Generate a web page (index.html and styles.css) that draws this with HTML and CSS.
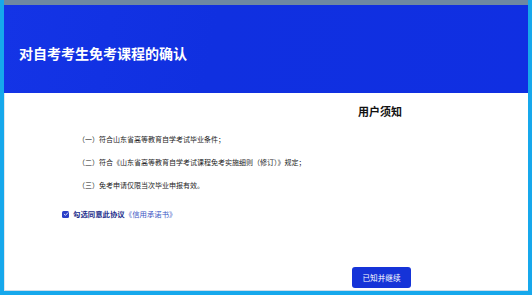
FILE: index.html
```html
<!DOCTYPE html>
<html lang="zh-CN">
<head>
    <meta charset="UTF-8">
    <meta name="viewport" content="width=device-width, initial-scale=1.0">
    <title>对自考考生免考课程的确认</title>
    <link rel="stylesheet" href="styles.css">
</head>
<body>
    <div class="frame">
        <div class="page-header">
            <h1>对自考考生免考课程的确认</h1>
        </div>

        <div class="page-body">
            <h2 class="notice-title">用户须知</h2>

            <ul class="notice-list">
                <li>（一）符合山东省高等教育自学考试毕业条件；</li>
                <li>（二）符合《山东省高等教育自学考试课程免考实施细则（修订）》规定；</li>
                <li>（三）免考申请仅限当次毕业申报有效。</li>
            </ul>

            <label class="agree">
                <span class="check-box">
                    <svg viewBox="0 0 8 8" width="6" height="6"><path d="M1.6 4.2 L3.3 5.8 L6.4 2.4" fill="none" stroke="#fff" stroke-width="1.1" stroke-linecap="round" stroke-linejoin="round"/></svg>
                </span>
                <span class="agree-text">勾选同意此协议</span><span class="agree-link">《信用承诺书》</span>
            </label>

            <div class="actions">
                <button class="btn-continue">已知并继续</button>
            </div>
        </div>
    </div>
</body>
</html>
```

FILE: styles.css
```css
html, body { margin: 0; padding: 0; }
body {
    font-family: "Noto Sans CJK SC", "Noto Sans", sans-serif;
    background: #fff;
}
.frame {
    width: 532px;
    height: 295px;
    box-sizing: border-box;
    border: 4px solid #16a8ec;
    border-top: 0;
    display: flex;
    flex-direction: column;
}
.page-header {
    height: 88px;
    box-sizing: content-box;
    border-top: 5px solid #6e88a2;
    background: linear-gradient(100deg, #1434e6 0%, #1030e0 40%, #102fe2 100%);
    display: flex;
    align-items: center;
    padding-left: 15px;
    flex-shrink: 0;
}
.page-header h1 {
    margin: 8px 0 0;
    color: #fff;
    font-size: 14px;
    font-weight: bold;
    line-height: 20px;
}
.page-body {
    flex: 1;
    display: flex;
    flex-direction: column;
    border-left: 1px solid #dfe6ee;
    border-bottom: 1px solid #cfdde8;
}
.notice-title {
    margin: 10px 0 0;
    padding-left: 353px;
    font-size: 11px;
    line-height: 16px;
    font-weight: bold;
    color: #111;
}
.notice-list {
    list-style: none;
    margin: 9px 0 0;
    padding-left: 73px;
}
.notice-list li {
    font-size: 7px;
    line-height: 23px;
    color: #222;
}
.agree {
    display: flex;
    align-items: center;
    margin-top: 10px;
    padding-left: 57px;
    font-size: 7.4px;
    line-height: 14px;
}
.check-box {
    width: 7px;
    height: 7px;
    border-radius: 1.5px;
    background: #2a3fc8;
    display: flex;
    align-items: center;
    justify-content: center;
    margin-right: 4px;
}
.agree-text { color: #1e2f8c; font-weight: bold; }
.agree-link { color: #3b55c4; }
.actions {
    margin-top: auto;
    padding-left: 347px;
    margin-bottom: 2px;
}
.btn-continue {
    width: 59px;
    height: 21px;
    border: none;
    border-radius: 3px;
    background: #1533d8;
    color: #fff;
    font-family: inherit;
    font-size: 7.6px;
    padding: 0;
    cursor: pointer;
}
```
